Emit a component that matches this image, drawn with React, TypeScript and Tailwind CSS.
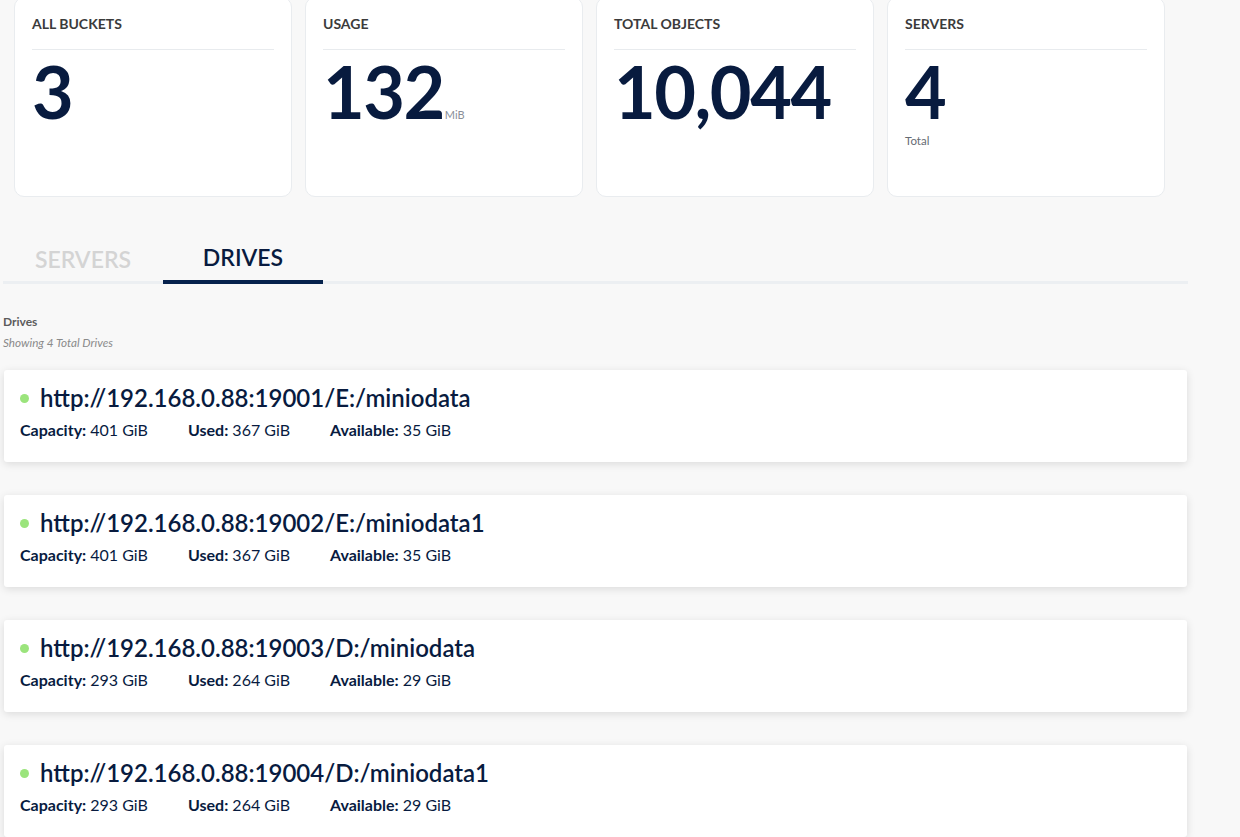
import React from "react";

const stats = [
  { title: "ALL BUCKETS", value: "3" },
  { title: "USAGE", value: "132", unit: "MiB" },
  { title: "TOTAL OBJECTS", value: "10,044" },
  { title: "SERVERS", value: "4", sub: "Total" },
];

const drives = [
  { url: "http://192.168.0.88:19001/E:/miniodata", cap: "401 GiB", used: "367 GiB", avail: "35 GiB" },
  { url: "http://192.168.0.88:19002/E:/miniodata1", cap: "401 GiB", used: "367 GiB", avail: "35 GiB" },
  { url: "http://192.168.0.88:19003/D:/miniodata", cap: "293 GiB", used: "264 GiB", avail: "29 GiB" },
  { url: "http://192.168.0.88:19004/D:/miniodata1", cap: "293 GiB", used: "264 GiB", avail: "29 GiB" },
];

const App = () => {
  return (
    <div
      className="w-[1240px] h-[837px] overflow-hidden bg-[#f8f8f8]"
      style={{ fontFamily: "Lato, 'Noto Sans', sans-serif" }}
    >
      <div className="pl-[14px] mt-[-3px] flex gap-[13px]">
        {stats.map((s) => (
          <div
            key={s.title}
            className="w-[278px] h-[200px] bg-white border border-[#e9ecef] rounded-[10px] px-[17px] pt-[16px]"
          >
            <div className="text-[14px] leading-[20px] font-bold text-[#3b3b3b] pb-[15px] border-b border-[#e8ebee]">
              {s.title}
            </div>
            <div className="flex items-baseline mt-[5px]">
              <span className="text-[72px] leading-[72px] font-bold text-[#081b3f] tracking-[-1.5px]">
                {s.value}
              </span>
              {s.unit && (
                <span className="text-[11px] text-[#8a8f98] ml-[1px]">{s.unit}</span>
              )}
            </div>
            {s.sub && (
              <div className="text-[11.5px] leading-[16px] text-[#666b73] mt-[6px]">{s.sub}</div>
            )}
          </div>
        ))}
      </div>

      <div className="pl-[3px] w-[1188px]">
        <div className="mt-[38px] flex border-b-[3px] border-[#eceff2]">
          <div className="w-[160px] h-[49px] flex items-center justify-center text-[23px] font-semibold text-[#d4d4d4] mb-[-3px]">
            SERVERS
          </div>
          <div className="w-[160px] h-[49px] flex items-center justify-center text-[23px] font-semibold text-[#081b3f] border-b-[4px] border-[#06224d] mb-[-4px]">
            DRIVES
          </div>
        </div>

        <div className="mt-[31px] text-[12px] leading-[14px] font-bold text-[#5c5c5c]">Drives</div>
        <div className="mt-[6px] text-[11.7px] leading-[14px] italic text-[#8a8a8a]">
          Showing 4 Total Drives
        </div>

        <div className="mt-[21px] flex flex-col gap-[33px] pl-[1px] pr-[1px]">
          {drives.map((d) => (
            <div
              key={d.url}
              className="h-[92px] bg-white rounded-[3px] shadow-[0_2px_9px_rgba(0,0,0,0.12)] pl-[16px] pt-[12px]"
            >
              <div className="flex items-center">
                <span className="w-[9px] h-[9px] rounded-full bg-[#9be47c] mr-[11px]" />
                <span className="text-[24px] leading-[32px] font-semibold text-[#081b3f]">
                  {d.url}
                </span>
              </div>
              <div className="flex gap-[40px] text-[16px] leading-[20px] text-[#081b3f] mt-[6px]">
                <span>
                  <b className="font-bold">Capacity:</b> {d.cap}
                </span>
                <span>
                  <b className="font-bold">Used:</b> {d.used}
                </span>
                <span>
                  <b className="font-bold">Available:</b> {d.avail}
                </span>
              </div>
            </div>
          ))}
        </div>
      </div>
    </div>
  );
};

export default App;
